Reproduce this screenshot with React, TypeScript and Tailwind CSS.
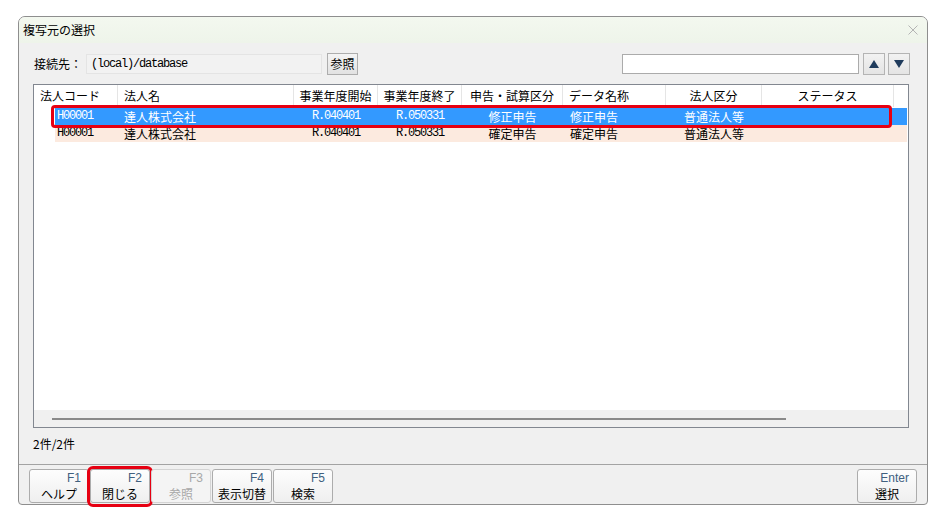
import React from "react";

type Col = { label: string; w: number; align: "left" | "center" };

const columns: Col[] = [
  { label: "法人コード", w: 84, align: "left" },
  { label: "法人名", w: 176, align: "left" },
  { label: "事業年度開始", w: 84, align: "center" },
  { label: "事業年度終了", w: 84, align: "center" },
  { label: "申告・試算区分", w: 101, align: "center" },
  { label: "データ名称", w: 103, align: "left" },
  { label: "法人区分", w: 96, align: "center" },
  { label: "ステータス", w: 132, align: "center" },
];

type Row = {
  code: string;
  name: string;
  start: string;
  end: string;
  kind: string;
  data: string;
  corp: string;
  selected: boolean;
};

const rows: Row[] = [
  {
    code: "H00001",
    name: "達人株式会社",
    start: "R.040401",
    end: "R.050331",
    kind: "修正申告",
    data: "修正申告",
    corp: "普通法人等",
    selected: true,
  },
  {
    code: "H00001",
    name: "達人株式会社",
    start: "R.040401",
    end: "R.050331",
    kind: "確定申告",
    data: "確定申告",
    corp: "普通法人等",
    selected: false,
  },
];

function FKey({
  k,
  label,
  disabled,
  marked,
}: {
  k: string;
  label: string;
  disabled?: boolean;
  marked?: boolean;
}) {
  return (
    <div
      className={`relative w-[60px] h-[34px] rounded-[3px] border flex flex-col ${
        disabled
          ? "border-[#d4d4d4] bg-[#f4f4f4]"
          : "border-[#acacac] bg-gradient-to-b from-[#fdfdfd] to-[#efefef]"
      }`}
    >
      <div
        className={`h-[16px] pr-[7px] text-right text-[12px] leading-[16px] font-['Liberation_Sans',sans-serif] ${
          disabled ? "text-[#a8a8a8]" : "text-[#40607f]"
        }`}
      >
        {k}
      </div>
      <div
        className={`h-[16px] text-center text-[12px] leading-[16px] ${
          disabled ? "text-[#a8a8a8]" : "text-black"
        }`}
      >
        {label}
      </div>
      {marked && (
        <div className="absolute left-[-4px] top-[-4px] right-[-4px] bottom-[-5px] rounded-[6px] border-[3px] border-[#e60012]" />
      )}
    </div>
  );
}

export default function App() {
  const mono = "font-['Liberation_Mono',monospace] text-[12px] tracking-[-1.2px]";
  return (
    <div className="w-[946px] h-[513px] bg-white pt-[16px] pl-[18px] font-['Noto_Sans_CJK_JP','Noto_Sans',sans-serif] text-[12px] text-black">
      <div className="w-[910px] h-[489px] border border-[#8e8e8e] rounded-t-[7px] rounded-b-[4px] bg-[#f0f0f0] flex flex-col">
        {/* title bar */}
        <div className="h-[26px] shrink-0 rounded-t-[6px] flex items-center justify-between pl-[4px] pr-[9px] bg-gradient-to-b from-[#f3f8ef] to-[#eef4ea]">
          <span className="leading-[16px]">複写元の選択</span>
          <svg width="10" height="10" viewBox="0 0 10 10">
            <path d="M0.5 0.5 L9.5 9.5 M9.5 0.5 L0.5 9.5" stroke="#b4b4b4" strokeWidth="1" />
          </svg>
        </div>

        {/* connection row */}
        <div className="mt-[10px] h-[22px] shrink-0 flex items-center pl-[15px] pr-[17px]">
          <span className="w-[52px] leading-[16px]">接続先：</span>
          <div className="w-[236px] h-[20px] bg-[#f2f2f2] border border-[#e4e4e4] flex items-center pl-[4px]">
            <span className={mono}>(local)/database</span>
          </div>
          <div className="ml-[5px] w-[31px] h-[22px] border border-[#adadad] bg-gradient-to-b from-[#f4f4f4] to-[#e2e2e2] flex items-center justify-center leading-[16px]">
            参照
          </div>
          <div className="flex-1" />
          <div className="w-[237px] h-[20px] bg-white border border-[#ababab]" />
          <div className="ml-[4px] w-[22px] h-[22px] border border-[#b4b4b4] bg-gradient-to-b from-[#f2f2f2] to-[#e4e4e4] flex items-center justify-center">
            <svg width="10" height="8" viewBox="0 0 10 8">
              <path d="M5 0 L10 8 L0 8 Z" fill="#1f3b5c" />
            </svg>
          </div>
          <div className="ml-[3px] w-[22px] h-[22px] border border-[#b4b4b4] bg-gradient-to-b from-[#f2f2f2] to-[#e4e4e4] flex items-center justify-center">
            <svg width="10" height="8" viewBox="0 0 10 8">
              <path d="M0 0 L10 0 L5 8 Z" fill="#1f3b5c" />
            </svg>
          </div>
        </div>

        {/* list view */}
        <div className="mt-[9px] ml-[14px] w-[876px] h-[344px] shrink-0 border border-[#828790] bg-white flex flex-col">
          <div className="h-[22px] shrink-0 flex">
            {columns.map((c, i) => (
              <div
                key={i}
                className={`h-full border-r border-[#e5e5e5] flex items-center leading-[16px] ${
                  c.align === "center" ? "justify-center" : "pl-[6px]"
                }`}
                style={{ width: c.w }}
              >
                {c.label}
              </div>
            ))}
          </div>
          <div className="relative flex-1 pt-[1px] pl-[21px]">
            {rows.map((r, i) => (
              <div
                key={i}
                className={`h-[17px] w-[852px] flex items-center leading-[17px] ${
                  r.selected ? "bg-[#3399ff] text-white" : "bg-[#fceadf] text-black"
                }`}
              >
                <div className={`w-[63px] pl-[2px] ${mono}`}>{r.code}</div>
                <div className="w-[176px] pl-[6px]">{r.name}</div>
                <div className={`w-[84px] text-center ${mono}`}>{r.start}</div>
                <div className={`w-[84px] text-center ${mono}`}>{r.end}</div>
                <div className="w-[101px] text-center">{r.kind}</div>
                <div className="w-[103px] pl-[7px]">{r.data}</div>
                <div className="w-[96px] text-center">{r.corp}</div>
                <div className="w-[132px]" />
              </div>
            ))}
            <div className="absolute left-[17px] top-[-2px] w-[841px] h-[23px] rounded-[4px] border-[3px] border-[#e60012]" />
          </div>
          <div className="h-[17px] shrink-0 bg-[#f0f0f0] flex items-center pl-[18px]">
            <div className="w-[734px] h-[2px] bg-[#8a8a8a]" />
          </div>
        </div>

        {/* record count */}
        <div className="h-[36px] shrink-0 pl-[14px] pt-[7px]">
          <span className="leading-[16px]">2件/2件</span>
        </div>

        {/* function keys */}
        <div className="flex-1 border-t border-[#a3a3a3] pt-[4px] pl-[10px] pr-[10px] flex">
          <div className="flex gap-[1px]">
            <FKey k="F1" label="ヘルプ" />
            <FKey k="F2" label="閉じる" marked />
            <FKey k="F3" label="参照" disabled />
            <FKey k="F4" label="表示切替" />
            <FKey k="F5" label="検索" />
          </div>
          <div className="flex-1" />
          <FKey k="Enter" label="選択" />
        </div>
      </div>
    </div>
  );
}
